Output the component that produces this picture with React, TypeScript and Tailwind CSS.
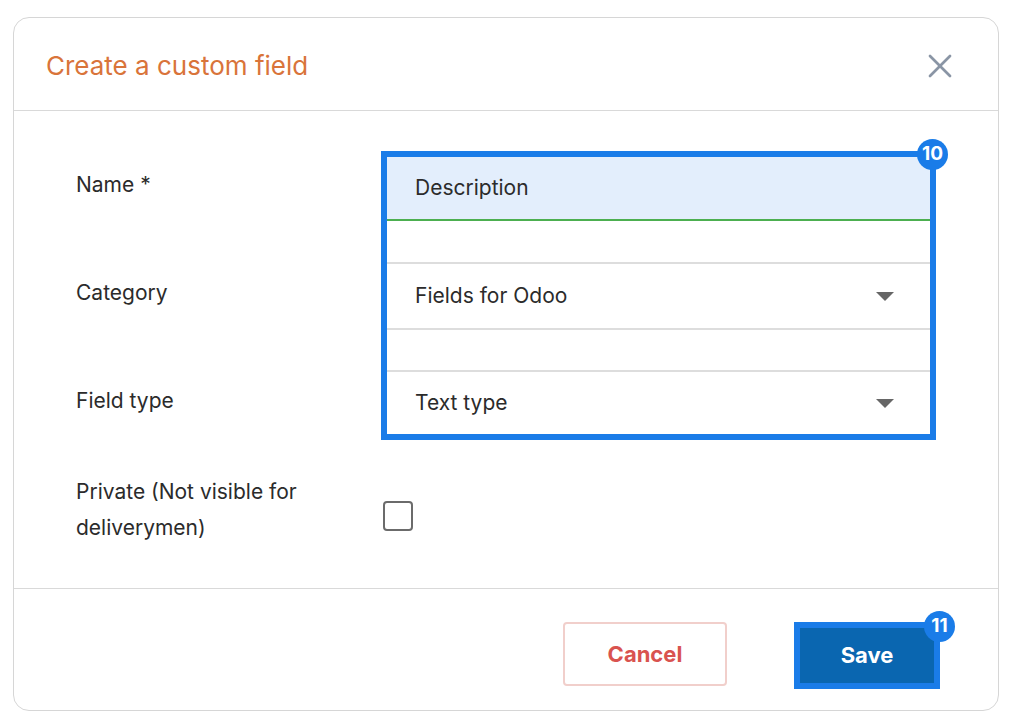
import { X } from "lucide-react";

export default function App() {
  return (
    <div className="w-[1011px] h-[727px] bg-white pt-[17px] pl-[13px]" style={{ fontFamily: "Inter, 'Open Sans', sans-serif" }}>
      <div className="w-[986px] h-[694px] border border-[#d6d6d6] rounded-[16px] flex flex-col">
        {/* Header */}
        <div className="h-[93px] flex items-center justify-between pl-[32px] pr-[38px] border-b border-[#d9d9d9]">
          <h1 className="text-[26px] text-[#d9743a] pt-[2px]">Create a custom field</h1>
          <X size={40} strokeWidth={1.6} className="text-[#8a95a5] mt-[4px]" />
        </div>

        {/* Body */}
        <div className="flex-1 flex pl-[62px] pt-[40px] border-b border-[#d9d9d9]">
          <div className="w-[305px] flex flex-col text-[21px] text-[#2b2b2b]">
            <div className="h-[63px] pt-[18px]">Name *</div>
            <div className="h-[108px] pt-[63px]">Category</div>
            <div className="h-[108px] pt-[63px]">Field type</div>
            <div className="pt-[44px] leading-[36px]">Private (Not visible for<br />deliverymen)</div>
          </div>
          <div className="flex flex-col">
            <div className="relative w-[555px] border-[6px] border-[#1a7ce8] text-[21px] text-[#2b2b2b]">
              <div className="h-[64px] bg-[#e3eefc] border-b-2 border-[#4caf50] flex items-center px-[28px]">Description</div>
              <div className="h-[43px] border-b-2 border-[#dddddd]" />
              <div className="h-[66px] border-b-2 border-[#dddddd] flex items-center justify-between px-[28px] pr-[36px]">
                <span>Fields for Odoo</span>
                <span className="w-0 h-0 border-l-[9px] border-r-[9px] border-t-[9px] border-l-transparent border-r-transparent border-t-[#666]" />
              </div>
              <div className="h-[42px] border-b-2 border-[#dddddd]" />
              <div className="h-[62px] flex items-center justify-between px-[28px] pr-[36px]">
                <span>Text type</span>
                <span className="w-0 h-0 border-l-[9px] border-r-[9px] border-t-[9px] border-l-transparent border-r-transparent border-t-[#666]" />
              </div>
              <span className="absolute -top-[18px] -right-[18px] w-[31px] h-[31px] rounded-full bg-[#1a7ce8] text-white text-[19px] font-bold flex items-center justify-center">10</span>
            </div>
            <div className="mt-[61px] ml-[2px] w-[30px] h-[30px] border-[2.5px] border-[#6b6b6b] rounded-[4px]" />
          </div>
        </div>

        {/* Footer */}
        <div className="h-[121px] flex items-start justify-end gap-[67px] pr-[58px] pt-[33px]">
          <button className="w-[164px] h-[64px] border-2 border-[#f1cfcb] rounded-[4px] text-[#d9534f] text-[22px] font-bold">Cancel</button>
          <div className="relative">
            <button className="w-[146px] h-[67px] border-[6px] border-[#1a7ce8] bg-[#0a66b0] text-white text-[22px] font-bold">Save</button>
            <span className="absolute -top-[11px] -right-[15px] w-[31px] h-[31px] rounded-full bg-[#1a7ce8] text-white text-[19px] font-bold flex items-center justify-center">11</span>
          </div>
        </div>
      </div>
    </div>
  );
}
